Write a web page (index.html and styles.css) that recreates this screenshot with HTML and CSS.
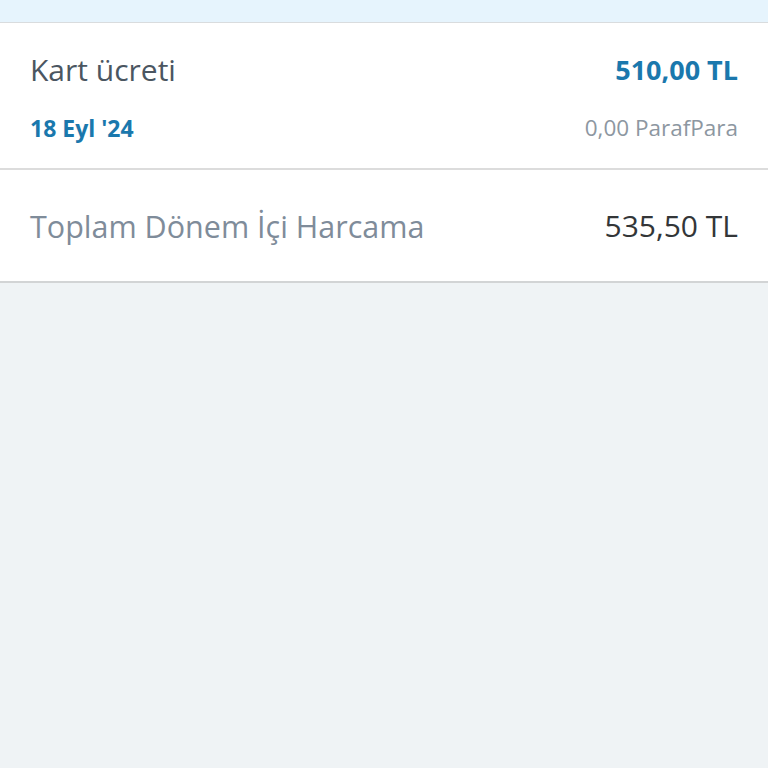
FILE: index.html
```html
<!DOCTYPE html>
<html lang="tr">
<head>
<meta charset="utf-8">
<link rel="stylesheet" href="styles.css">
</head>
<body>
<div class="top-strip"></div>
<div class="card">
  <div class="txn">
    <div class="row">
      <span class="title">Kart ücreti</span>
      <span class="amount">510,00 TL</span>
    </div>
    <div class="row sub">
      <span class="date">18 Eyl '24</span>
      <span class="points">0,00 ParafPara</span>
    </div>
  </div>
  <div class="total">
    <span class="total-label">Toplam Dönem İçi Harcama</span>
    <span class="total-value">535,50 TL</span>
  </div>
</div>
</body>
</html>
```
FILE: styles.css
```css
html, body {
  margin: 0;
  padding: 0;
}
body {
  background: #eff3f5;
  font-family: "Open Sans", "Noto Sans", sans-serif;
  width: 768px;
  height: 768px;
}
.top-strip {
  height: 22px;
  background: #e6f4fd;
  border-bottom: 1px solid #d9dcde;
}
.card {
  background: #ffffff;
  border-bottom: 2px solid #d2d4d5;
}
.txn {
  padding: 29px 30px 26px;
  border-bottom: 2px solid #dcdcdc;
}
.row {
  display: flex;
  justify-content: space-between;
  align-items: center;
}
.title {
  font-size: 30px;
  line-height: 36px;
  color: #4b5661;
}
.amount {
  font-size: 27px;
  line-height: 36px;
  font-weight: 700;
  color: #1a78ad;
}
.sub {
  margin-top: 26px;
}
.date {
  font-size: 23px;
  line-height: 28px;
  font-weight: 700;
  color: #1a78ad;
}
.points {
  font-size: 22.5px;
  line-height: 28px;
  color: #8d97a1;
}
.total {
  height: 111px;
  padding: 0 30px;
  display: flex;
  justify-content: space-between;
  align-items: center;
}
.total-label {
  font-size: 30.5px;
  color: #7f8c9a;
}
.total-value {
  font-size: 30px;
  color: #333638;
}
```
